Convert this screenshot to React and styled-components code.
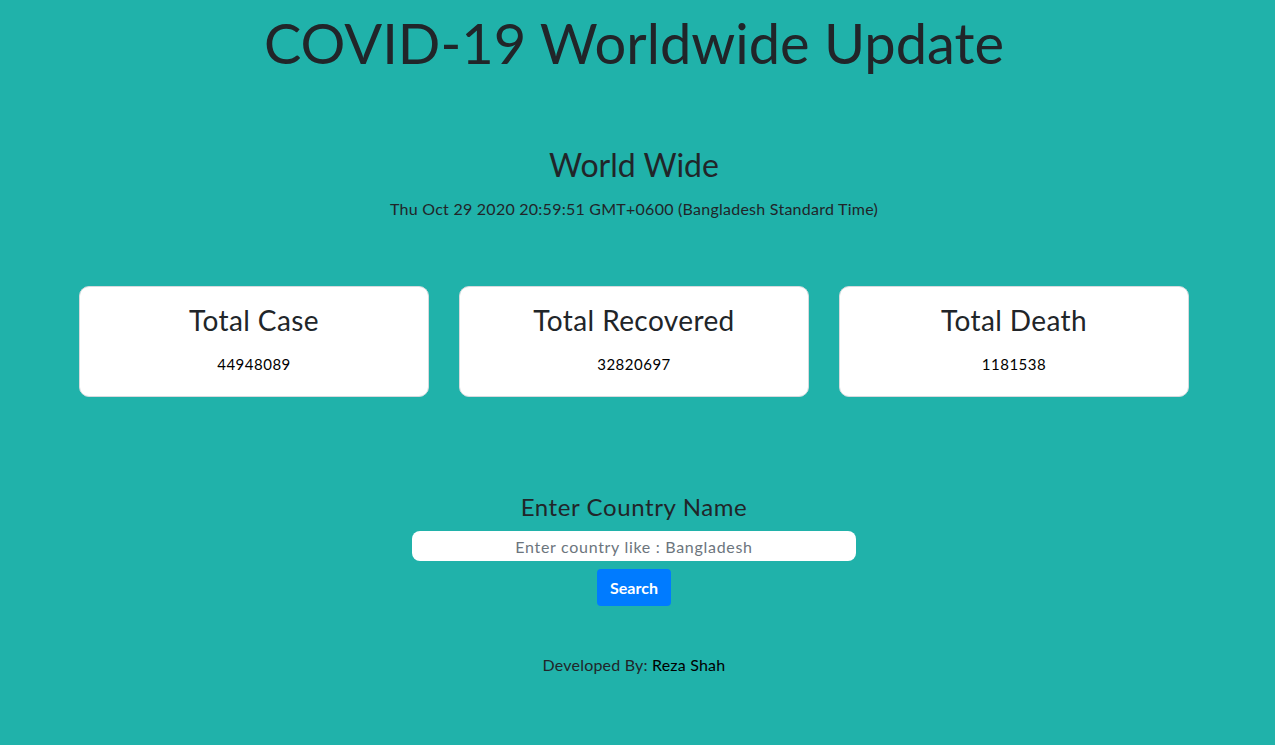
import React, { useState } from "react";
import styled, { createGlobalStyle } from "styled-components";

const GlobalStyle = createGlobalStyle`
  html, body {
    margin: 0;
    padding: 0;
    background: #20b2aa;
  }
  body {
    font-family: "Lato", "Open Sans", sans-serif;
    color: #212529;
  }
  * {
    box-sizing: border-box;
  }
`;

const stats = [
  { title: "Total Case", value: "44948089" },
  { title: "Total Recovered", value: "32820697" },
  { title: "Total Death", value: "1181538" },
];

const App = () => {
  const [country, setCountry] = useState("");

  return (
    <Page>
      <GlobalStyle />
      <Title>COVID-19 Worldwide Update</Title>

      <WorldSection>
        <SubTitle>World Wide</SubTitle>
        <DateText>
          Thu Oct 29 2020 20:59:51 GMT+0600 (Bangladesh Standard Time)
        </DateText>
      </WorldSection>

      <CardRow>
        {stats.map((item) => (
          <Card key={item.title}>
            <CardTitle>{item.title}</CardTitle>
            <CardValue>{item.value}</CardValue>
          </Card>
        ))}
      </CardRow>

      <SearchBlock>
        <SearchLabel>Enter Country Name</SearchLabel>
        <SearchInput
          value={country}
          onChange={(e) => setCountry(e.target.value)}
          placeholder="Enter country like : Bangladesh"
        />
        <SearchButton>Search</SearchButton>
      </SearchBlock>

      <Footer>
        Developed By: <Author>Reza Shah</Author>
      </Footer>
    </Page>
  );
};

const Page = styled.div`
  min-height: 100vh;
  padding: 9px 7px 40px 0;
  display: flex;
  flex-direction: column;
  align-items: center;
  text-align: center;
`;

const Title = styled.h1`
  margin: 0;
  font-size: 56px;
  font-weight: 400;
  line-height: 1.2;
`;

const WorldSection = styled.div`
  margin-top: 70px;
  display: flex;
  flex-direction: column;
  align-items: center;
  gap: 12px;
`;

const SubTitle = styled.h2`
  margin: 0;
  font-size: 32px;
  font-weight: 400;
  line-height: 1.2;
`;

const DateText = styled.p`
  margin: 0;
  font-size: 16px;
  line-height: 1.5;
  letter-spacing: 0.25px;
`;

const CardRow = styled.div`
  margin-top: 65px;
  display: grid;
  grid-template-columns: repeat(3, 350px);
  gap: 30px;
`;

const Card = styled.div`
  height: 111px;
  background: #fff;
  border: 1px solid #d6dadd;
  border-radius: 10px;
  padding-top: 17px;
  display: flex;
  flex-direction: column;
  align-items: center;
  gap: 16px;
`;

const CardTitle = styled.h3`
  margin: 0;
  font-size: 28px;
  font-weight: 400;
  line-height: 1.2;
  letter-spacing: 0.4px;
`;

const CardValue = styled.p`
  margin: 0;
  font-size: 15px;
  font-weight: 400;
  line-height: 1.5;
  letter-spacing: 0.5px;
  color: #000;
`;

const SearchBlock = styled.div`
  margin-top: 96px;
  display: flex;
  flex-direction: column;
  align-items: center;
`;

const SearchLabel = styled.h4`
  margin: 0 0 10px;
  font-size: 24px;
  font-weight: 400;
  line-height: 1.2;
  letter-spacing: 0.6px;
`;

const SearchInput = styled.input`
  width: 444px;
  height: 30px;
  border: none;
  border-radius: 8px;
  background: #fff;
  font-family: inherit;
  font-size: 16px;
  letter-spacing: 0.7px;
  text-align: center;
  color: #495057;
  outline: none;

  &::placeholder {
    color: #6c757d;
  }
`;

const SearchButton = styled.button`
  margin-top: 8px;
  width: 74px;
  height: 37px;
  border: none;
  border-radius: 4px;
  background: #007bff;
  color: #fff;
  font-family: inherit;
  font-size: 16px;
  font-weight: 700;
  cursor: pointer;
`;

const Footer = styled.p`
  margin: 47px 0 0;
  font-size: 16px;
  line-height: 1.5;
  letter-spacing: 0.2px;
`;

const Author = styled.span`
  color: #000;
`;

export default App;
